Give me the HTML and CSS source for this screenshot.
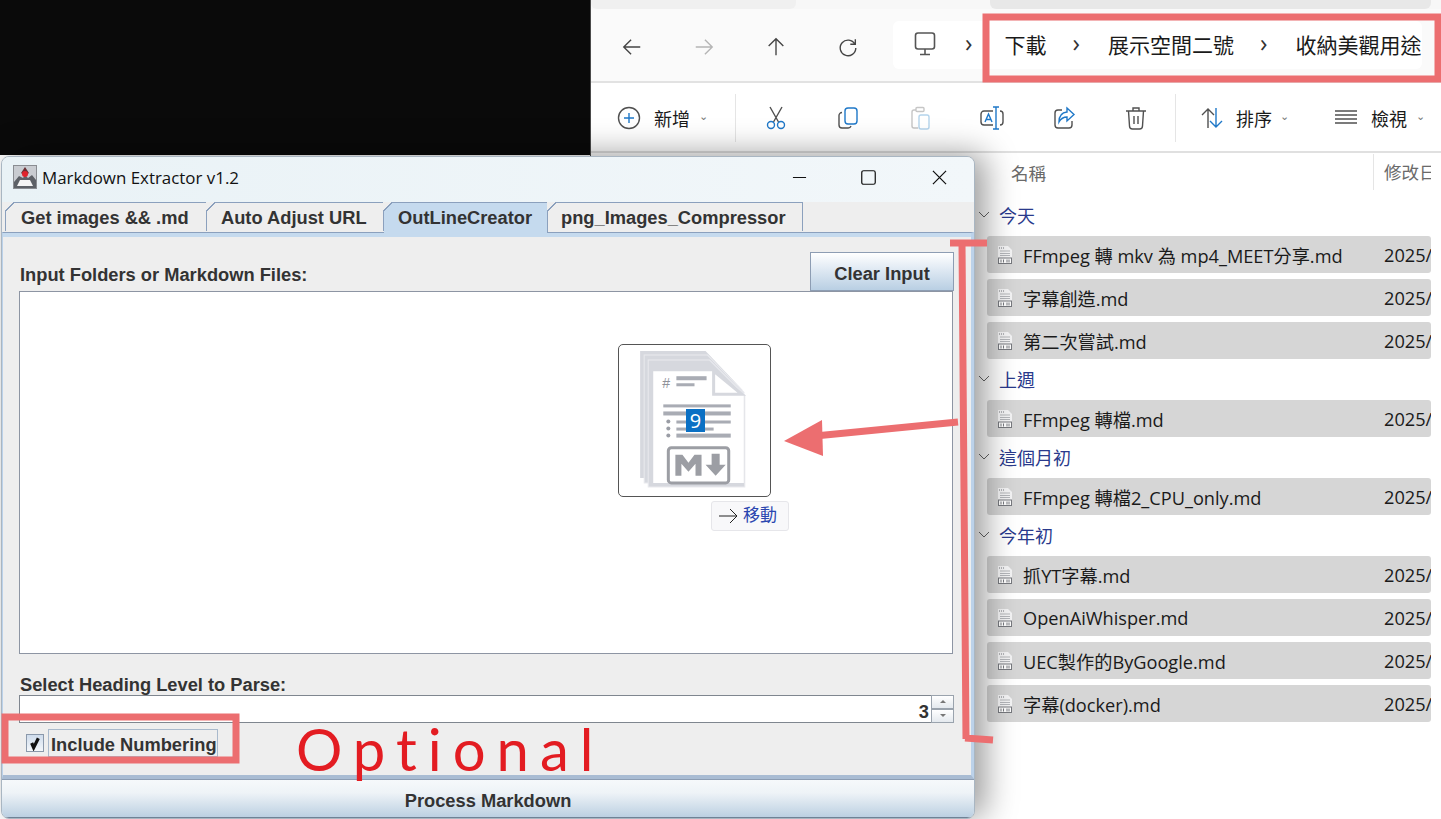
FILE: index.html
```html
<!DOCTYPE html>
<html lang="zh-Hant">

<head>
    <meta charset="UTF-8" />
    <title>Markdown Extractor v1.2</title>
    <link rel="stylesheet" href="styles.css">
</head>

<body>
    <div class="desk">

        <!-- file explorer behind the app -->
        <div class="explorer">
            <div class="tabstrip">
                <div class="strip-tab strip-tab-a"></div>
                <div class="strip-tab strip-tab-b"></div>
            </div>

            <div class="navbar">
                <svg class="nav-icon" viewBox="0 0 24 24"><path d="M21 12H3M11 4l-8 8 8 8" /></svg>
                <svg class="nav-icon nav-off" viewBox="0 0 24 24"><path d="M3 12h18M13 4l8 8-8 8" /></svg>
                <svg class="nav-icon" viewBox="0 0 24 24"><path d="M12 21V3M4 11l8-8 8 8" /></svg>
                <svg class="nav-icon" viewBox="0 0 24 24"><path d="M19.500 9A8.500 8.500 0 1 0 20.500 13M20 3.500V9h-5.500" /></svg>
                <div class="crumbs">
                    <svg class="pc-icon" viewBox="0 0 24 24"><rect x="2.500" y="1" width="19" height="16" rx="2.500" /><path d="M12 17v5M7 22.500h10" /></svg>
                    <span class="sep first-sep">&#8250;</span>
                    <span class="crumb">下載</span>
                    <span class="sep">&#8250;</span>
                    <span class="crumb">展示空間二號</span>
                    <span class="sep">&#8250;</span>
                    <span class="crumb">收納美觀用途</span>
                </div>
            </div>

            <div class="cmdbar">
                <div class="cmd cmd-new">
                    <svg class="cmd-icon" viewBox="0 0 24 24"><circle cx="12" cy="12" r="10.500" /><path class="blue" d="M12 7v10M7 12h10" /></svg>
                    <span>新增</span><span class="caret">&#8964;</span>
                </div>
                <div class="divider"></div>
                <div class="tools">
                    <svg class="cmd-icon" viewBox="0 0 24 24"><path d="M6 1l8.500 15M18 1L9.500 16" /><circle class="blue" cx="7" cy="19" r="3.500" /><circle class="blue" cx="17" cy="19" r="3.500" /></svg>
                    <svg class="cmd-icon" viewBox="0 0 24 24"><rect class="blue" x="9" y="2" width="12" height="16" rx="3" /><path d="M6 6.500A3 3 0 0 0 3 9.500V19a3 3 0 0 0 3 3h6a3 3 0 0 0 3-2" /></svg>
                    <svg class="cmd-icon cmd-off" viewBox="0 0 24 24"><path d="M8 4H6a2 2 0 0 0-2 2v14a2 2 0 0 0 2 2h4" /><rect x="8" y="1.500" width="8" height="4" rx="1" /><rect class="blue" x="11" y="9" width="10" height="14" rx="2" /></svg>
                    <svg class="cmd-icon" viewBox="0 0 24 24"><path d="M13 5H4a3 3 0 0 0-3 3v8a3 3 0 0 0 3 3h9M20 5a3 3 0 0 1 3 3v8a3 3 0 0 1-3 3" /><path class="blue" d="M16 1v22M13 1h6M13 23h6M5 16l3.500-8 3.500 8M6.200 13.500h4.600" /></svg>
                    <svg class="cmd-icon" viewBox="0 0 24 24"><path d="M10 4H6a3 3 0 0 0-3 3v12a3 3 0 0 0 3 3h11a3 3 0 0 0 3-3v-4" /><path class="blue" d="M15 2l7 6.500-7 6.500v-4c-4 0-6 1.500-8 5 0-6 3-9.500 8-10z" /></svg>
                    <svg class="cmd-icon" viewBox="0 0 24 24"><path d="M2 5h20M9 5V2h6v3M4.500 5l1 15a3 3 0 0 0 3 3h7a3 3 0 0 0 3-3l1-15M10 10v8M14 10v8" /></svg>
                </div>
                <div class="divider"></div>
                <div class="cmd cmd-sort">
                    <svg class="cmd-icon" viewBox="0 0 24 24"><path d="M8 22V3M2 9l6-6 6 6" /><path class="blue" d="M16 2v19M10 15l6 6 6-6" /></svg>
                    <span>排序</span><span class="caret">&#8964;</span>
                </div>
                <div class="cmd">
                    <svg class="cmd-icon" viewBox="0 0 24 24"><path d="M1 5h22M1 9h22M1 13h22M1 17h22" /></svg>
                    <span>檢視</span><span class="caret">&#8964;</span>
                </div>
            </div>

            <div class="columns">
                <span class="col-name">名稱</span>
                <span class="col-date">修改日</span>
            </div>

            <div class="filelist" id="filelist"></div>
        </div>

        <!-- java app window -->
        <div class="appwin">
            <div class="titlebar">
                <svg class="java-icon" viewBox="0 0 24 24">
                    <rect x="0.500" y="0.500" width="23" height="23" fill="#c9ccd1" stroke="#8a8d92" />
                    <path d="M1 17l5-6 4 2 2-3 3 3 4-3 4 5v8H1z" fill="#5d6167" />
                    <path d="M4 21l3-6h10l3 6z" fill="#f5f5f5" />
                    <path d="M12 2l4 6-4 3-4-3z" fill="#6b3034" />
                    <circle cx="12" cy="9" r="3" fill="#e0242c" />
                </svg>
                <span class="title-text">Markdown Extractor v1.2</span>
                <div class="win-btns">
                    <svg class="win-btn" viewBox="0 0 16 16"><path d="M1 8h14" /></svg>
                    <svg class="win-btn win-max" viewBox="0 0 16 16"><rect x="0.800" y="0.800" width="14.400" height="14.400" rx="2" /></svg>
                    <svg class="win-btn" viewBox="0 0 16 16"><path d="M1 1l14 14M15 1L1 15" /></svg>
                </div>
            </div>

            <div class="tabs">
                <div class="tab tab-1">Get images &amp;&amp; .md</div>
                <div class="tab tab-2">Auto Adjust URL</div>
                <div class="tab tab-3 tab-on">OutLineCreator</div>
                <div class="tab tab-4">png_Images_Compressor</div>
            </div>

            <div class="panel">
                <div class="input-head">
                    <label class="swing-label">Input Folders or Markdown Files:</label>
                    <button class="swing-btn clear-btn">Clear Input</button>
                </div>
                <div class="droparea"></div>
                <label class="swing-label heading-label">Select Heading Level to Parse:</label>
                <div class="spinner">
                    <div class="spin-value">3</div>
                    <div class="spin-arrows">
                        <div class="spin-arrow"><span class="tri-up"></span></div>
                        <div class="spin-arrow"><span class="tri-down"></span></div>
                    </div>
                </div>
                <div class="check-row">
                    <span class="checkbox">
                        <svg viewBox="0 0 12 12"><path d="M3.500 6l1.500 3.500 3.500-7" /></svg>
                    </span>
                    <span class="check-label">Include Numbering</span>
                </div>
            </div>

            <button class="swing-btn process-btn">Process Markdown</button>
        </div>

        <!-- drag image over the text area -->
        <div class="dragimg">
            <svg viewBox="0 0 150 150">
                <path d="M21 6H86L122 44V132H21z" fill="#d6d8de" />
                <path d="M25 10H88L124 47V137H25z" fill="#d6d8de" stroke="#e9eaee" />
                <path d="M29 15H90L125 50V141H29z" fill="#d6d8de" stroke="#e9eaee" />
                <path d="M34 26H94V49H124V137H34z" fill="#fff" />
                <path d="M94 26L122 49H94z" fill="#fff" stroke="#d6d8de" stroke-width="3" />
                <text class="drag-hash" x="43" y="43">#</text>
                <rect x="57" y="31" width="30" height="4" fill="#a9acb4" />
                <rect x="57" y="38" width="18" height="3" fill="#a9acb4" />
                <rect x="44" y="59" width="67" height="3" fill="#a9acb4" />
                <rect x="44" y="66" width="67" height="4" fill="#a9acb4" />
                <rect x="57" y="75" width="54" height="3" fill="#a9acb4" />
                <rect x="57" y="82" width="37" height="3" fill="#a9acb4" />
                <rect x="57" y="88" width="54" height="4" fill="#a9acb4" />
                <circle cx="49" cy="76" r="2" fill="#9a9da5" />
                <circle cx="49" cy="83" r="2" fill="#9a9da5" />
                <circle cx="49" cy="90" r="2" fill="#9a9da5" />
                <rect x="49" y="102" width="60" height="35" rx="3" fill="#fff" stroke="#9c9ea4" stroke-width="3" />
                <path d="M56 130v-21h7l6 8 6-8h7v21h-6v-12l-7 8-7-8v12zM92 108h8v11h6l-10 11-10-11h6z" fill="#9c9ea4" />
            </svg>
            <div class="drag-count">9</div>
        </div>
        <div class="move-tip">
            <svg viewBox="0 0 20 16"><path d="M1 8h18M12 1l7 7-7 7" /></svg>
            <span>移動</span>
        </div>

        <!-- red marks drawn on the screenshot -->
        <svg class="marks" viewBox="0 0 1441 819">
            <rect x="986" y="17" width="452" height="62" />
            <rect x="5" y="717" width="231" height="43" />
            <path d="M950 243h37M962 243L966 739M965 738l28 2M958 422L815 436" />
            <path class="mark-fill" d="M784 441L822 420 823 456z" />
        </svg>
        <div class="optional">Optional</div>
    </div>

    <script>
        const groups = [
            { title: "今天", files: ["FFmpeg 轉 mkv 為 mp4_MEET分享.md", "字幕創造.md", "第二次嘗試.md"] },
            { title: "上週", files: ["FFmpeg 轉檔.md"] },
            { title: "這個月初", files: ["FFmpeg 轉檔2_CPU_only.md"] },
            { title: "今年初", files: ["抓YT字幕.md", "OpenAiWhisper.md", "UEC製作的ByGoogle.md", "字幕(docker).md"] }
        ];

        const fileIcon = `<svg class="file-icon" viewBox="0 0 16 20">
            <path d="M1 1h10l4 4v14H1z" fill="#f4f4f5" />
            <path d="M2 3h5" stroke="#77797e" stroke-dasharray="1 1" />
            <path d="M3 6h10M3 8.500h10M3 10.500h10" stroke="#b4b6ba" stroke-width="1.200" />
            <rect x="1.500" y="13" width="13" height="5.500" fill="#fff" stroke="#77797e" />
            <path d="M4 17.500v-3M6.500 17.500v-3M10 17.500v-3M12 17.500v-3" stroke="#77797e" />
        </svg>`;

        document.getElementById("filelist").innerHTML = groups.map(g => `
            <div class="group-head">
                <svg class="chev" viewBox="0 0 12 8"><path d="M1 1l5 5 5-5" /></svg>
                <span>${g.title}</span>
            </div>
            ${g.files.map(f => `
                <div class="file-row">
                    ${fileIcon}
                    <span class="file-name">${f}</span>
                    <span class="file-date">2025/</span>
                </div>
            `).join("")}
        `).join("");
    </script>
</body>

</html>
```

FILE: styles.css
```css
* {
    box-sizing: border-box;
}

html,
body {
    margin: 0;
    height: 100%;
    overflow: hidden;
}

body {
    background: #fff;
    font-family: "Open Sans", "Noto Sans CJK TC", sans-serif;
}

.desk {
    position: relative;
    width: 1441px;
    height: 819px;
    overflow: hidden;
    background: linear-gradient(#0a0a0a 155px, #fff 155px);
}

/* explorer */

.explorer {
    position: absolute;
    left: 590px;
    top: 0;
    width: 851px;
    height: 819px;
    background: #fff;
    border-left: 1px solid #4a4a4a;
    color: #1a1a1a;
}

.tabstrip {
    display: flex;
    justify-content: space-between;
    height: 9px;
    background: #f7f7f7;
}

.strip-tab {
    height: 9px;
    background: #e8e8e8;
    border-radius: 0 0 6px 6px;
}

.strip-tab-a {
    width: 205px;
    background: #f0f0f0;
}

.strip-tab-b {
    width: 441px;
    margin-right: 10px;
}

.navbar {
    display: flex;
    align-items: center;
    height: 74px;
    padding-left: 30px;
    background: #fafafa;
    border-bottom: 2px solid #e2e2e2;
}

.nav-icon {
    width: 22px;
    height: 22px;
    margin: 3px 50px 0 0;
    fill: none;
    stroke: #444;
    stroke-width: 1.500;
}

.nav-off {
    stroke: #b5b5b5;
}

.crumbs {
    display: flex;
    align-items: center;
    height: 48px;
    margin-left: -16px;
    padding: 0 0 2px 20px;
    background: #fff;
    border-radius: 6px;
    font-size: 21px;
}

.pc-icon {
    width: 24px;
    height: 24px;
    fill: none;
    stroke: #555;
    stroke-width: 1.600;
}

.sep {
    margin: 0 28px 3px 26px;
    font-size: 25px;
    line-height: 1;
    color: #333;
}

.first-sep {
    margin: 0 32px 3px 28px;
}

.crumb {
    white-space: nowrap;
}

.cmdbar {
    display: flex;
    align-items: center;
    height: 70px;
    padding: 2px 0 0 26px;
    background: #fff;
    border-bottom: 2px solid #e0e0e0;
    font-size: 18px;
    white-space: nowrap;
}

.tools {
    display: flex;
    gap: 48px;
    padding: 0 27px 0 28px;
}

.cmd {
    display: flex;
    align-items: center;
    gap: 13px;
}

.cmd-icon {
    flex: none;
    width: 24px;
    height: 24px;
    fill: none;
    stroke: #505050;
    stroke-width: 1.400;
}

.cmd-icon .blue {
    stroke: #1f78c8;
}

.cmd-off {
    stroke: #c6c6c6;
}

.cmd-off .blue {
    stroke: #b4d4ec;
}

.caret {
    margin-left: -4px;
    margin-bottom: 6px;
    font-size: 11px;
    color: #777;
}

.divider {
    width: 1px;
    height: 48px;
    background: #e5e5e5;
}

.cmd-new {
    width: 118px;
}

.cmd-sort {
    width: 134px;
    margin-left: 24px;
    gap: 12px;
}

.columns {
    display: flex;
    align-items: center;
    height: 48px;
    margin-right: 10px;
    padding: 0 0 10px 420px;
    font-size: 17.500px;
    color: #6a6a6a;
    white-space: nowrap;
    overflow: hidden;
}

.col-name {
    width: 362px;
    flex: none;
}

.col-date {
    height: 36px;
    line-height: 36px;
    padding-left: 10px;
    border-left: 1px solid #e5e5e5;
}

.filelist {
    margin-left: 396px;
    margin-right: 10px;
}

.group-head {
    display: flex;
    align-items: center;
    gap: 9px;
    height: 29px;
    margin: 0 0 6px -9px;
    padding-bottom: 2px;
    font-size: 18px;
    color: #2a3a8c;
}

.chev {
    width: 12px;
    height: 8px;
    fill: none;
    stroke: #666;
}

.file-row {
    display: flex;
    align-items: center;
    height: 37px;
    margin-bottom: 6px;
    padding-left: 10px;
    background: #d6d6d6;
    border-radius: 3px;
    font-size: 18.200px;
    white-space: nowrap;
    overflow: hidden;
}

.file-icon {
    flex: none;
    width: 16px;
    height: 20px;
}

.file-name {
    flex: 1;
    margin-left: 10px;
}

.file-date {
    flex: none;
    width: 47px;
}

/* app window */

.appwin {
    position: absolute;
    left: 1px;
    top: 156px;
    width: 974px;
    height: 663px;
    display: flex;
    flex-direction: column;
    background: #eeeeee;
    border: 1px solid #a9b6c2;
    border-radius: 8px;
    overflow: hidden;
    box-shadow: 10px -2px 32px rgba(0, 0, 0, 0.4);
}

.titlebar {
    display: flex;
    align-items: center;
    flex: none;
    height: 45px;
    padding: 0 0 5px 11px;
    background: linear-gradient(90deg, #e9f2f6, #f2f7fa);
}

.java-icon {
    width: 24px;
    height: 24px;
}

.title-text {
    margin-left: 5px;
    font-size: 16.900px;
    color: #111;
}

.win-btns {
    display: flex;
    align-items: center;
    gap: 54px;
    margin-left: auto;
    margin-right: 27px;
}

.win-btn {
    width: 15px;
    height: 15px;
    fill: none;
    stroke: #111;
    stroke-width: 1.300;
}

.win-max {
    margin-right: 2px;
}

.tabs {
    display: flex;
    flex: none;
    height: 30px;
    padding-left: 3px;
    background: #eeeeee;
}

.tab {
    position: relative;
    height: 29px;
    padding-left: 15px;
    font: bold 18.300px/29px "Liberation Sans", sans-serif;
    color: #333;
    border: 1px solid #8ba0bd;
    border-left: 0;
    border-bottom: 0;
    background: #eeeeee;
    white-space: nowrap;
}

/* the clipped corner of a swing tab */
.tab::before {
    content: "";
    position: absolute;
    left: -1px;
    top: -1px;
    width: 9px;
    height: 9px;
    background: linear-gradient(135deg, #eeeeee 48%, #8ba0bd 48%, #8ba0bd 56%, transparent 56%);
}

.tab-1 {
    width: 202px;
    border-left: 1px solid #8ba0bd;
}

.tab-2 {
    width: 177px;
    padding-left: 14px;
}

.tab-3 {
    width: 164px;
    padding-left: 14px;
}

.tab-4 {
    width: 255px;
    padding-left: 13px;
}

.tab-on {
    height: 31px;
    background: #c5daee;
}

.panel {
    flex: 1;
    padding: 15px 18px 0 16px;
    border-top: 1px solid #8ba0bd;
    border-right: 3px solid #bcd2ea;
    border-left: 1px solid #bcd2ea;
    border-bottom: 4px solid #a9bcd3;
    box-shadow: inset 0 4px 0 #c5daee;
}

.input-head {
    display: flex;
    align-items: flex-end;
    justify-content: space-between;
    height: 43px;
    margin-right: -1px;
}

.swing-label {
    display: block;
    padding-left: 1px;
    font: bold 18.300px/1.200 "Liberation Sans", sans-serif;
    color: #333;
}

.input-head .swing-label {
    padding-bottom: 5px;
}

.swing-btn {
    font: bold 18.300px "Liberation Sans", sans-serif;
    color: #333;
    border: 1px solid #8d9db3;
    background: linear-gradient(#fff, #dfe9f3 45%, #b9cfe3);
}

.clear-btn {
    width: 144px;
    height: 39px;
    padding: 5px 0 0;
}

.droparea {
    height: 363px;
    background: #fff;
    border: 1px solid #8d95a3;
}

.heading-label {
    margin: 20px 0 -1px;
}

.spinner {
    display: flex;
    height: 28px;
    margin-right: -1px;
    border: 1px solid #7f868f;
    border-right: 0;
    background: #fff;
}

.spin-value {
    flex: 1;
    padding-right: 2px;
    text-align: right;
    font: bold 18.300px/31px "Liberation Sans", sans-serif;
    color: #333;
}

.spin-arrows {
    width: 23px;
    margin-top: -1px;
}

.spin-arrow {
    display: flex;
    align-items: center;
    justify-content: center;
    height: 14px;
    border: 1px solid #9aa3ad;
    background: linear-gradient(#fff, #e4e9ee);
}

.tri-up,
.tri-down {
    width: 0;
    height: 0;
    border-left: 3px solid transparent;
    border-right: 3px solid transparent;
}

.tri-up {
    border-bottom: 3px solid #777;
}

.tri-down {
    border-top: 3px solid #777;
}

.check-row {
    display: flex;
    align-items: center;
    gap: 4px;
    margin-top: 6px;
    margin-left: 7px;
}

.checkbox {
    width: 18px;
    height: 18px;
    border: 1px solid #8b99ab;
    background: linear-gradient(#cfdcec, #f4f7fa);
}

.checkbox svg {
    display: block;
    width: 16px;
    height: 16px;
    fill: none;
    stroke: #111;
    stroke-width: 2.400;
}

.check-label {
    height: 28px;
    padding: 0 0 0 2px;
    font: bold 18.300px/29px "Liberation Sans", sans-serif;
    color: #333;
    border: 1px solid #a9b9cc;
    background: #eeeeee;
    white-space: nowrap;
}

.process-btn {
    flex: none;
    height: 39px;
    width: 100%;
    padding: 5px 0 0;
    border-width: 1px 0 1px;
    border-bottom-color: #6f8296;
    background: linear-gradient(#f6f9fb, #eef3f7 35%, #bcd0e2);
}

/* drag preview */

.dragimg {
    position: absolute;
    left: 618px;
    top: 344px;
    width: 153px;
    height: 153px;
    background: #fff;
    border: 1.500px solid #555;
    border-radius: 5px;
    overflow: hidden;
}

.dragimg svg {
    display: block;
    width: 100%;
    height: 100%;
}

.drag-hash {
    font: 14px "Liberation Sans", sans-serif;
    fill: #8f9299;
}

.drag-count {
    position: absolute;
    left: 67px;
    top: 64px;
    width: 19px;
    height: 23px;
    background: #0a70c4;
    color: #fff;
    text-align: center;
    font-size: 20px;
    line-height: 23px;
}

.move-tip {
    position: absolute;
    left: 711px;
    top: 501px;
    width: 78px;
    height: 30px;
    display: flex;
    align-items: center;
    gap: 5px;
    padding: 0 0 5px 6px;
    background: #f8f8fa;
    border: 1px solid #e6e6ea;
    border-radius: 3px;
    font-size: 17px;
    color: #2a46b0;
}

.move-tip svg {
    flex: none;
    width: 20px;
    height: 18px;
    margin-top: 5px;
    fill: none;
    stroke: #222;
    stroke-width: 1;
}

/* annotations */

.marks {
    position: absolute;
    left: 0;
    top: 0;
    width: 1441px;
    height: 819px;
    fill: none;
    stroke: #ec6e70;
    stroke-width: 7;
    pointer-events: none;
}

.mark-fill {
    fill: #ec6e70;
    stroke: none;
}

.optional {
    position: absolute;
    left: 296px;
    top: 714px;
    font: 58px/70px "Lato", sans-serif;
    letter-spacing: 11px;
    color: #e31c22;
    white-space: nowrap;
}
```
